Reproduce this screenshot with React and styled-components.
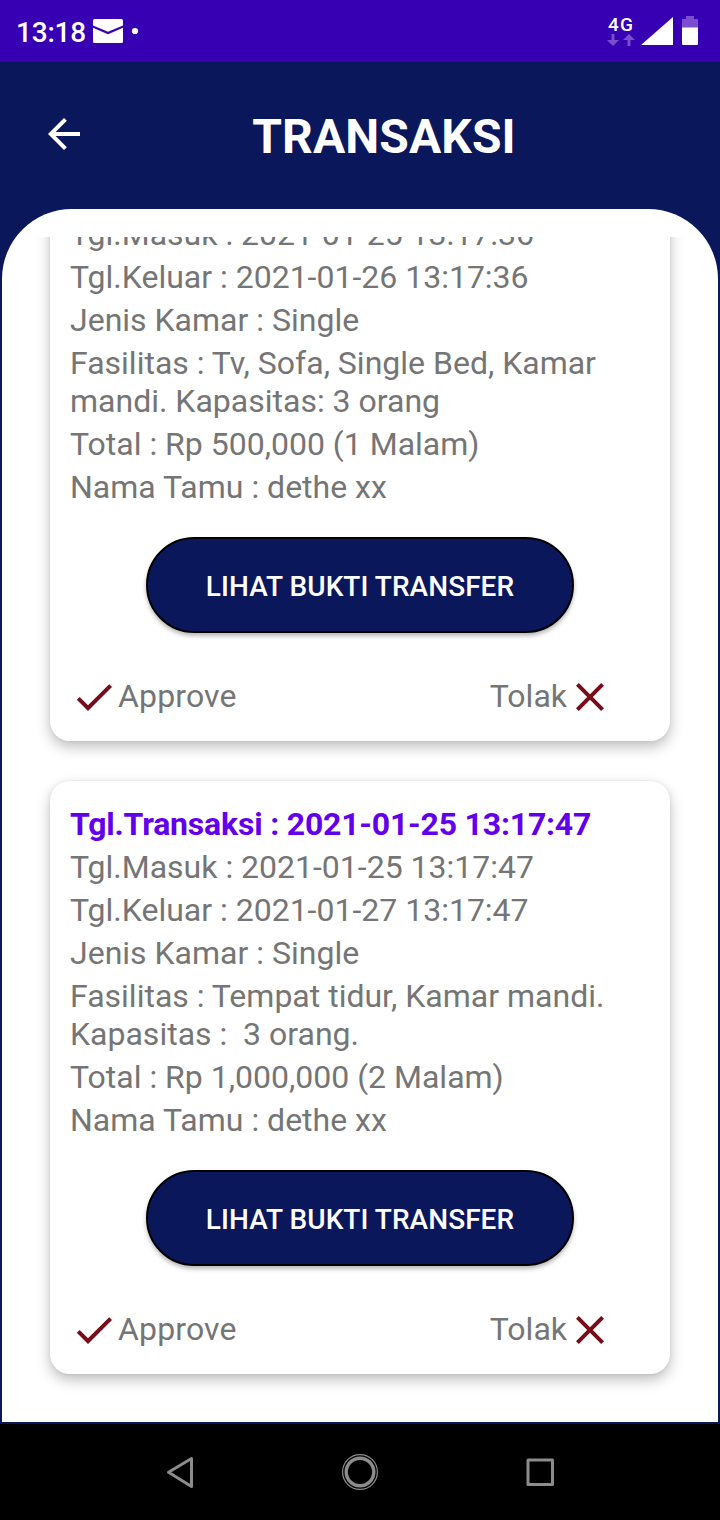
import React from "react";
import styled, { createGlobalStyle } from "styled-components";

const navy = "#0b175b";
const maroon = "#760d18";

const GlobalStyle = createGlobalStyle`
  * { box-sizing: border-box; }
  body { margin: 0; background: #000; }
  svg { display: block; flex: none; }
`;

const Screen = styled.div`
  width: 720px;
  height: 1520px;
  display: flex;
  flex-direction: column;
  overflow: hidden;
  background: ${navy};
  font-family: Roboto, "Liberation Sans", sans-serif;
`;

const StatusBar = styled.header`
  height: 62px;
  flex: none;
  display: flex;
  align-items: center;
  justify-content: space-between;
  padding: 0 22px 0 16px;
  background: #3700b3;
  color: #fff;
`;

const StatusGroup = styled.div`
  display: flex;
  align-items: center;
`;

const Clock = styled.span`
  width: 77px;
  padding-top: 3px;
  font-size: 28px;
  line-height: 34px;
  font-weight: 500;
  letter-spacing: -0.2px;
`;

const Network = styled.div`
  width: 28px;
  display: flex;
  flex-direction: column;
  align-items: center;
  margin-right: 6px;
`;

const NetworkLabel = styled.span`
  margin-top: -1px;
  font-size: 19px;
  line-height: 18px;
  font-weight: 500;
  letter-spacing: 1.2px;
`;

const TitleBar = styled.div`
  height: 147px;
  flex: none;
  display: flex;
  align-items: center;
  padding: 0 40px 3px;
`;

const Title = styled.h1`
  flex: 1;
  margin: 0;
  padding-top: 6px;
  text-align: center;
  color: #fff;
  font-size: 48px;
  line-height: 56px;
  font-weight: 700;
  letter-spacing: 0.1px;
`;

const Panel = styled.main`
  height: 1213px;
  flex: none;
  margin: 0 2px 2px;
  padding-top: 28px;
  border-radius: 70px 70px 0 0;
  background: #fff;
`;

const ScrollArea = styled.div`
  height: 1185px;
  overflow: hidden;
  display: flex;
  flex-direction: column;
  justify-content: flex-end;
  gap: 40px;
  padding: 0 48px 48px;
`;

const Card = styled.article`
  flex: none;
  height: 593px;
  display: flex;
  flex-direction: column;
  padding: 19px 20px 20px;
  border-radius: 20px;
  background: #fff;
  box-shadow: 0 6px 14px rgba(0, 0, 0, 0.25), 0 0 4px rgba(0, 0, 0, 0.06);
`;

const Field = styled.p`
  margin: 5px 0 0;
  white-space: pre-wrap;
  font-size: 32px;
  line-height: 38px;
  font-weight: ${(p) => (p.$heading ? 700 : 400)};
  letter-spacing: ${(p) => (p.$heading ? "-0.2px" : "0")};
  color: ${(p) => (p.$heading ? "#6200ee" : "#757575")};
`;

const ProofButton = styled.button`
  align-self: center;
  flex: none;
  width: 428px;
  height: 96px;
  margin: 31px 0 40px;
  padding: 2px 0 0;
  border: 2px solid #000;
  border-radius: 48px;
  background: ${navy};
  color: #fff;
  font-family: inherit;
  font-size: 28px;
  font-weight: 500;
  letter-spacing: 0.05px;
  box-shadow: 0 3px 4px rgba(0, 0, 0, 0.28);
`;

const Actions = styled.div`
  height: 48px;
  display: flex;
  justify-content: space-between;
  padding-right: 36px;
`;

const Action = styled.div`
  display: flex;
  align-items: center;
  font-size: 32px;
  line-height: 38px;
  color: #757575;
`;

const ActionLabel = styled.span`
  padding-bottom: 2px;
  letter-spacing: ${(p) => (p.$tracking ? p.$tracking : "0")};
  margin-right: ${(p) => (p.$tight ? "-1px" : "0")};
`;

const NavBar = styled.nav`
  height: 96px;
  flex: none;
  display: flex;
  align-items: center;
  justify-content: space-between;
  padding: 0 160px;
  background: #000;
`;

const ArrowBack = () => (
  <svg width="48" height="48" viewBox="0 0 24 24" fill="#fff">
    <path d="M20 11H7.83l5.59-5.59L12 4l-8 8 8 8 1.41-1.41L7.83 13H20z" />
  </svg>
);

const CheckIcon = () => (
  <svg width="48" height="48" viewBox="0 0 24 24" fill={maroon}>
    <path d="M9 16.17L4.83 12l-1.42 1.41L9 19 21 7l-1.41-1.41z" />
  </svg>
);

const CloseIcon = () => (
  <svg width="48" height="48" viewBox="0 0 24 24" fill={maroon}>
    <path d="M19 6.41L17.59 5 12 10.59 6.41 5 5 6.41 10.59 12 5 17.59 6.41 19 12 13.41 17.59 19 19 17.59 13.41 12z" />
  </svg>
);

const transactions = [
  {
    date: "2021-01-25 13:17:36",
    checkIn: "2021-01-25 13:17:36",
    checkOut: "2021-01-26 13:17:36",
    room: "Single",
    facilities: "Tv, Sofa, Single Bed, Kamar\nmandi. Kapasitas: 3 orang",
    total: "Rp 500,000 (1 Malam)",
    guest: "dethe xx",
  },
  {
    date: "2021-01-25 13:17:47",
    checkIn: "2021-01-25 13:17:47",
    checkOut: "2021-01-27 13:17:47",
    room: "Single",
    facilities: "Tempat tidur, Kamar mandi.\nKapasitas :  3 orang.",
    total: "Rp 1,000,000 (2 Malam)",
    guest: "dethe xx",
  },
];

const TransactionCard = ({ item }) => (
  <Card>
    <Field $heading>Tgl.Transaksi : {item.date}</Field>
    <Field>Tgl.Masuk : {item.checkIn}</Field>
    <Field>Tgl.Keluar : {item.checkOut}</Field>
    <Field>Jenis Kamar : {item.room}</Field>
    <Field>Fasilitas : {item.facilities}</Field>
    <Field>Total : {item.total}</Field>
    <Field>Nama Tamu : {item.guest}</Field>
    <ProofButton>LIHAT BUKTI TRANSFER</ProofButton>
    <Actions>
      <Action>
        <CheckIcon />
        <ActionLabel $tracking="0.15px">Approve</ActionLabel>
      </Action>
      <Action>
        <ActionLabel $tight>Tolak</ActionLabel>
        <CloseIcon />
      </Action>
    </Actions>
  </Card>
);

export default function App() {
  return (
    <>
      <GlobalStyle />
      <Screen>
        <StatusBar>
          <StatusGroup>
            <Clock>13:18</Clock>
            <svg width="46" height="24" viewBox="0 0 46 24" fill="#fff">
              <path d="M1.5 0h27Q30 0 30 1.500V6.500L15 12.800 0 6.500V1.500Q0 0 1.500 0z" />
              <path d="M0 8.700L15 15.300 30 8.700V22.500Q30 24 28.500 24H1.500Q0 24 0 22.500z" />
              <circle cx="42" cy="12" r="3.100" />
            </svg>
          </StatusGroup>
          <StatusGroup>
            <Network>
              <NetworkLabel>4G</NetworkLabel>
              <svg width="28" height="12" viewBox="0 0 28 12" fill="#7c4dcd">
                <path d="M4.500 0h3v6H12L6 12 0 6h4.500zM20.500 12h3V6H28L22 0l-6 6h4.500z" />
              </svg>
            </Network>
            <svg width="57" height="30" viewBox="0 0 57 30" fill="#fff">
              <path d="M0 29L32 1v28z" />
              <path d="M45 0h8v3h3q1 0 1 1v8H41V4q0-1 1-1h3z" fill="#7c4dcd" />
              <path d="M41 11.500h16V28q0 1-1 1H42q-1 0-1-1z" />
            </svg>
          </StatusGroup>
        </StatusBar>
        <TitleBar>
          <ArrowBack />
          <Title>TRANSAKSI</Title>
        </TitleBar>
        <Panel>
          <ScrollArea>
            {transactions.map((item) => (
              <TransactionCard key={item.date} item={item} />
            ))}
          </ScrollArea>
        </Panel>
        <NavBar>
          <svg width="40" height="40" viewBox="0 0 40 40" fill="none" stroke="#8c8c8c" strokeWidth="3" strokeLinejoin="round">
            <path d="M31.500 6.500v28L8.500 20.300z" />
          </svg>
          <svg width="40" height="40" viewBox="0 0 40 40" fill="none" stroke="#8c8c8c">
            <circle cx="20" cy="20" r="17.400" strokeWidth="1.200" />
            <circle cx="20" cy="20" r="13.800" strokeWidth="3.400" />
          </svg>
          <svg width="40" height="40" viewBox="0 0 40 40" fill="none" stroke="#8c8c8c" strokeWidth="3" strokeLinejoin="round">
            <rect x="8" y="8" width="24.500" height="24.500" />
          </svg>
        </NavBar>
      </Screen>
    </>
  );
}
